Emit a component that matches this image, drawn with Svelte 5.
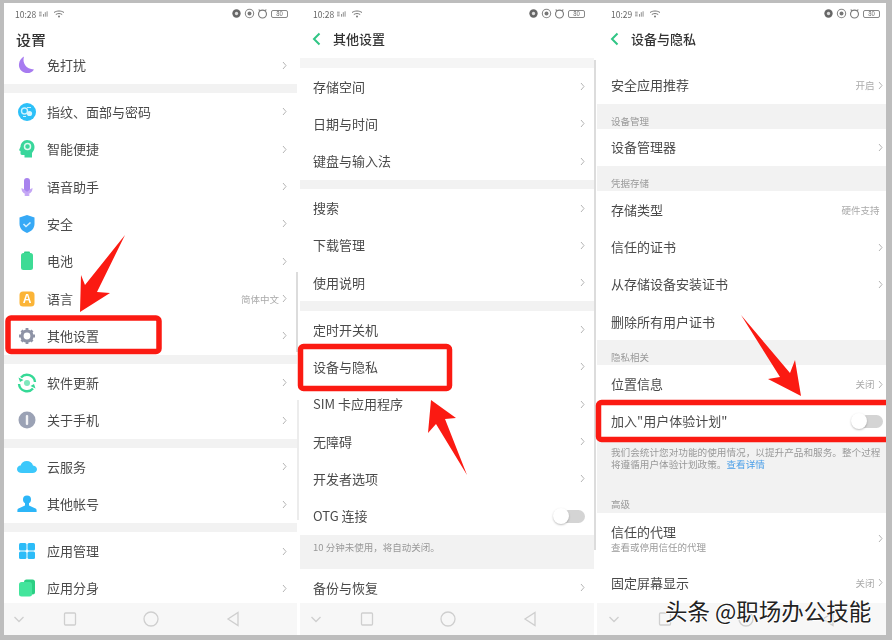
<script lang="ts">
  type Row = { text: string; icon?: string; value?: string; sub?: string; toggle?: boolean; noArrow?: boolean };
  type Section = { label?: string; note?: string[]; link?: string; noteClass?: string; gap?: string; rows: Row[] };

  const t = (text: string, value?: string): Row => ({ text, value });
  const ic = (icon: string, text: string, value?: string): Row => ({ icon, text, value });

  const phones: { time: string; title: string; back: boolean; cls: string; sections: Section[] }[] = [
    {
      time: '10:28',
      title: '设置',
      back: false,
      cls: 'first',
      sections: [
        { rows: [ic('moon', '免打扰')] },
        {
          gap: 'gap',
          rows: [
            ic('finger', '指纹、面部与密码'),
            ic('head', '智能便捷'),
            ic('mic', '语音助手'),
            ic('shield', '安全'),
            ic('battery', '电池'),
            ic('lang', '语言', '简体中文'),
            ic('gear', '其他设置'),
          ],
        },
        { gap: 'gap', rows: [ic('update', '软件更新'), ic('info', '关于手机')] },
        { gap: 'gap', rows: [ic('cloud', '云服务'), ic('person', '其他帐号')] },
        { gap: 'gap', rows: [ic('grid', '应用管理'), ic('clone', '应用分身')] },
      ],
    },
    {
      time: '10:28',
      title: '其他设置',
      back: true,
      cls: 'second',
      sections: [
        { gap: 'gap', rows: [t('存储空间'), t('日期与时间'), t('键盘与输入法')] },
        { gap: 'gap', rows: [t('搜索'), t('下载管理'), t('使用说明')] },
        {
          gap: 'gap',
          rows: [
            t('定时开关机'),
            t('设备与隐私'),
            t('SIM 卡应用程序'),
            t('无障碍'),
            t('开发者选项'),
            { text: 'OTG 连接', toggle: true },
          ],
        },
        { note: ['10 分钟未使用，将自动关闭。'], noteClass: 'short', rows: [t('备份与恢复')] },
      ],
    },
    {
      time: '10:29',
      title: '设备与隐私',
      back: true,
      cls: 'third',
      sections: [
        { gap: 'pad', rows: [t('安全应用推荐', '开启')] },
        { label: '设备管理', rows: [t('设备管理器')] },
        {
          label: '凭据存储',
          rows: [
            { text: '存储类型', value: '硬件支持', noArrow: true },
            t('信任的证书'),
            t('从存储设备安装证书'),
            { text: '删除所有用户证书', noArrow: true },
          ],
        },
        {
          label: '隐私相关',
          rows: [t('位置信息', '关闭'), { text: '加入"用户体验计划"', toggle: true }],
        },
        {
          note: ['我们会统计您对功能的使用情况，以提升产品和服务。整个过程', '将遵循用户体验计划政策。'],
          link: '查看详情',
          noteClass: 'long',
          label: '高级',
          rows: [{ text: '信任的代理', sub: '查看或停用信任的代理' }, t('固定屏幕显示', '关闭')],
        },
      ],
    },
  ];
</script>

{#snippet rowIcon(name: string)}
  <svg class="icon" viewBox="0 0 20 20" aria-hidden="true">
    {#if name === 'moon'}
      <path d="M7 1.500C5 8 9 14 17 14.500c-2 3-5 4-8 3.500C4 17 1.500 13 2 9c.3-3.500 2.500-6 5-7.500z" fill="#a77bf0" />
    {:else if name === 'finger'}
      <circle cx="10" cy="10" r="9" fill="#2cc0f8" />
      <circle cx="7.500" cy="9" r="3" fill="none" stroke="#c9f0ff" stroke-width="1.400" />
      <circle cx="12.500" cy="11.500" r="2.600" fill="#d8f5ff" />
      <path d="M10 5.500h4M6 14.500h3" stroke="#c9f0ff" stroke-width="1.200" />
    {:else if name === 'head'}
      <path d="M10 1c4.500 0 7.500 3 7.500 7 0 3-1.500 4.500-2.500 6v4.500H7.500V16H5c-1 0-1.500-.8-1.500-1.500V12L2 11.200l1.500-3.500C3.800 4 6.500 1 10 1z" fill="#38d69b" />
      <circle cx="10.500" cy="7.500" r="3" fill="none" stroke="#dffaf0" stroke-width="1.500" />
    {:else if name === 'mic'}
      <rect x="7" y="1" width="6" height="14" rx="3" fill="#a883ee" />
      <path d="M4.500 11c0 4 2.500 6 5.500 6s5.500-2 5.500-6l-2 1-3.500 3-3.500-3z" fill="#c4a6f5" />
      <rect x="7.500" y="17" width="5" height="2" rx="1" fill="#c4a6f5" />
    {:else if name === 'shield'}
      <path d="M10 1l7.500 2.500V10c0 4.500-3.500 7.500-7.500 9-4-1.500-7.500-4.500-7.500-9V3.500z" fill="#37a9f6" />
      <path d="M6.500 10l2.500 2.500 4.500-4" fill="none" stroke="#d5f0ff" stroke-width="1.600" />
    {:else if name === 'battery'}
      <rect x="7" y="0.500" width="6" height="3" rx="1" fill="#2ecf86" />
      <rect x="4" y="2" width="12" height="17" rx="2.500" fill="#3ddb95" />
    {:else if name === 'lang'}
      <rect x="2.500" y="2.500" width="15" height="15" rx="3.500" fill="#fbb437" />
      <text x="10" y="14" class="lang-a">A</text>
    {:else if name === 'gear'}
      <circle cx="10" cy="10" r="5" fill="none" stroke="#8e93a6" stroke-width="3.200" />
      <path d="M10 2v3M10 15v3M2 10h3M15 10h3M4.500 4.500l2 2M13.500 13.500l2 2M15.500 4.500l-2 2M6.500 13.500l-2 2" stroke="#8e93a6" stroke-width="2.800" />
    {:else if name === 'update'}
      <path d="M18 9a8 8 0 0 0-14-4.500M2 11a8 8 0 0 0 14 4.500" fill="none" stroke="#35d996" stroke-width="2.400" />
      <path d="M1.500 4.500L6.500 7l-3.500 2zM18.500 15.500L13.500 13l3.500-2z" fill="#35d996" />
      <circle cx="10" cy="10" r="3" fill="#7fe8bd" />
    {:else if name === 'info'}
      <circle cx="10" cy="10" r="8.500" fill="#9ba2b5" />
      <rect x="8.800" y="5" width="2.400" height="10" rx="1" fill="#f2f3f6" />
    {:else if name === 'cloud'}
      <path d="M5 16c-3 0-5-1.600-5-3.800 0-2 1.500-3.400 3.600-3.600C4.200 6 6.800 4 9.800 4c3 0 5.400 1.800 6.200 4.400 2.400.2 4 1.800 4 3.800 0 2.200-2 3.800-4.500 3.800z" fill="#3cc8fb" />
    {:else if name === 'person'}
      <circle cx="10" cy="5.500" r="4" fill="#2cb6f8" />
      <path d="M8 9h4v2.500l6.500 3c.8.4 1.100 1 1.100 2v1.500H.4v-1.500c0-1 .3-1.600 1.100-2l6.500-3z" fill="#2cb6f8" />
    {:else if name === 'grid'}
      <rect x="2" y="2" width="7.500" height="7.500" rx="1.500" fill="#2cbcf8" />
      <rect x="10.500" y="2" width="7.500" height="7.500" rx="1.500" fill="#2cbcf8" />
      <rect x="2" y="10.500" width="7.500" height="7.500" rx="1.500" fill="#2cbcf8" />
      <rect x="10.500" y="10.500" width="7.500" height="7.500" rx="1.500" fill="#2cbcf8" />
    {:else if name === 'clone'}
      <rect x="7" y="1.500" width="11" height="15" rx="2.500" fill="#2ccf84" />
      <rect x="2" y="4" width="13" height="14.500" rx="2.500" fill="#43e59c" />
    {/if}
  </svg>
{/snippet}

<div class="page">
  <div class="phones">
    {#each phones as phone}
      <section class="phone {phone.cls}">
        <div class="status">
          <div class="status-side">
            <span>{phone.time}</span>
            <svg class="signal" viewBox="0 0 10 8" aria-hidden="true">
              <path d="M0 2h3M0 4h3M0 6h3M5 7V4M7 7V2M9 7V1" stroke="#888" stroke-width="1" fill="none" />
            </svg>
            <svg class="wifi" viewBox="0 0 12 8" aria-hidden="true">
              <path d="M1 2.500c3-2 7-2 10 0M2.800 4.500c2-1.300 4.400-1.300 6.400 0" stroke="#777" stroke-width="1" fill="none" />
              <circle cx="6" cy="6.500" r="1" fill="#777" />
            </svg>
          </div>
          <div class="status-side right">
            <svg class="dot" viewBox="0 0 10 10" aria-hidden="true">
              <circle cx="5" cy="5" r="3.800" fill="#666" />
              <circle cx="5" cy="5" r="1.500" fill="#ddd" />
            </svg>
            <svg class="dot" viewBox="0 0 10 10" aria-hidden="true">
              <circle cx="5" cy="5" r="3.800" fill="none" stroke="#888" />
              <circle cx="5" cy="5" r="1.800" fill="#777" />
            </svg>
            <svg class="dot" viewBox="0 0 10 10" aria-hidden="true">
              <circle cx="5" cy="5.500" r="3.600" fill="none" stroke="#777" />
              <path d="M1.500 1.500l1.500 1M8.500 1.500L7 2.500" stroke="#777" />
            </svg>
            <span class="batt">80</span>
          </div>
        </div>

        <header class="head">
          {#if phone.back}
            <svg class="back" viewBox="0 0 9 14" aria-hidden="true">
              <path d="M7.500 1.500L2 7l5.500 5.500" fill="none" stroke="#30c585" stroke-width="2" />
            </svg>
          {/if}
          <h1>{phone.title}</h1>
        </header>

        <div class="list">
          {#each phone.sections as sec}
            {#if sec.gap}<div class={sec.gap}></div>{/if}
            {#if sec.note}
              <div class="note {sec.noteClass}">
                {#each sec.note as line, i}
                  <div>{line}{#if sec.link && i === sec.note.length - 1} <span class="link">{sec.link}</span>{/if}</div>
                {/each}
              </div>
            {/if}
            {#if sec.label}
              <div class="label" class:after-note={sec.note}>{sec.label}</div>
            {/if}
            {#each sec.rows as row}
              <div class="row" class:tall={row.sub}>
                {#if row.icon}{@render rowIcon(row.icon)}{/if}
                <div class="row-text">
                  <div>{row.text}</div>
                  {#if row.sub}<div class="sub">{row.sub}</div>{/if}
                </div>
                {#if row.value}<span class="value">{row.value}</span>{/if}
                {#if row.toggle}
                  <span class="toggle"><span class="knob"></span></span>
                {:else if !row.noArrow}
                  <svg class="arrow" viewBox="0 0 5 9" aria-hidden="true">
                    <path d="M1 1l3 3.500L1 8" fill="none" stroke="#b5b5b5" stroke-width="1" />
                  </svg>
                {/if}
              </div>
            {/each}
          {/each}
        </div>

        <nav class="nav">
          <svg viewBox="0 0 16 16" aria-hidden="true"><path d="M3.500 6L8 10.500 12.500 6" /></svg>
          <svg viewBox="0 0 16 16" aria-hidden="true"><rect x="2.500" y="2" width="11" height="12" rx="1" /></svg>
          <svg viewBox="0 0 16 16" aria-hidden="true"><circle cx="8" cy="8" r="7" /></svg>
          <svg viewBox="0 0 16 16" aria-hidden="true"><path d="M13 1.500v13L3 8z" /></svg>
        </nav>
      </section>
    {/each}
  </div>

  <div class="scroll one"></div>
  <div class="scroll two"></div>
  <div class="scroll three"></div>

  <svg class="marks" viewBox="0 0 886 640" aria-hidden="true">
    <rect x="8" y="318" width="151" height="33.500" rx="3" />
    <rect x="300.500" y="346.500" width="149" height="42" rx="3" />
    <rect x="598.500" y="402.500" width="300" height="37" rx="3" />
    <polygon points="125,235 97,292 110,293 80,312 81,275 85,285" />
    <polygon points="431,400 456,418 445,419 467,475 436,424 428,433" />
    <polygon points="741,315 790,373 795,360 801,396 768,379 780,377" />
  </svg>
</div>

<div class="watermark">头条 @职场办公技能</div>

<style>
  :global(body) {
    margin: 0;
    background: #fff;
  }

  .page {
    position: relative;
    width: 892px;
    height: 640px;
    box-sizing: border-box;
    padding: 3px 6px 5px 4px;
    background: #bdbdbd;
    font-family: 'Noto Sans CJK SC', 'Liberation Sans', sans-serif;
    color: #4a4a4a;
    filter: blur(0.55px);
    overflow: hidden;
  }

  .phones {
    display: flex;
    height: 100%;
    gap: 3px;
    background: #fff;
  }

  .phone {
    display: flex;
    flex-direction: column;
    min-width: 0;
    background: #fff;
  }

  .first {
    width: 293px;
    --left: 13px;
    --right: 10px;
  }

  .second {
    width: 294px;
    --left: 13px;
    --right: 9px;
  }

  .third {
    width: 289px;
    --left: 14px;
    --right: 3.500px;
  }

  .status {
    flex: none;
    height: 21px;
    display: flex;
    align-items: center;
    justify-content: space-between;
    padding: 0 9px 0 11px;
    font-size: 8.500px;
    color: #666;
  }

  .second .status {
    padding-left: 13px;
  }

  .third .status {
    padding-left: 14px;
    padding-right: 6px;
  }

  .status-side {
    display: flex;
    align-items: center;
    gap: 3px;
  }

  .status-side.right {
    gap: 2px;
  }

  .signal {
    width: 9px;
    height: 8px;
  }

  .wifi {
    width: 12px;
    height: 8px;
    margin-left: 2px;
  }

  .dot {
    width: 11px;
    height: 11px;
  }

  .batt {
    width: 17px;
    height: 8px;
    margin-left: 1px;
    border: 1px solid #888;
    border-radius: 2px;
    box-sizing: border-box;
    font-size: 6px;
    line-height: 6px;
    text-align: center;
  }

  .head {
    flex: none;
    height: 34px;
    box-sizing: border-box;
    display: flex;
    align-items: center;
    padding: 0 0 5px var(--left);
    color: #333;
  }

  .first .head {
    padding-left: 12px;
    padding-bottom: 4px;
  }

  .head h1 {
    margin: 0;
    font-size: 13px;
    font-weight: 500;
  }

  .first h1 {
    font-size: 15px;
  }

  .back {
    width: 9px;
    height: 14px;
    margin: 0 12px 0 -1px;
  }

  .list {
    flex: 1;
    min-height: 0;
    overflow: hidden;
  }

  .first .list {
    overflow: visible;
  }

  .first .list .row:first-child {
    margin-top: -11.500px;
  }

  .gap {
    height: 9.500px;
    background: #f2f2f2;
  }

  .second .list > .gap:first-child {
    height: 10px;
    background: #f5f5f5;
  }

  .pad {
    height: 8.500px;
  }

  .label {
    height: 25px;
    box-sizing: border-box;
    padding: 11px 0 0 var(--left);
    background: #f2f2f2;
    font-size: 9.500px;
    line-height: 13px;
    color: #999;
  }

  .label.after-note {
    height: 21px;
    padding-top: 6px;
  }

  .note {
    background: #f2f2f2;
    padding-left: var(--left);
    font-size: 9.650px;
    line-height: 12px;
    color: #999;
    white-space: nowrap;
    box-sizing: border-box;
  }

  .note.short {
    height: 34px;
    padding-top: 6px;
    font-size: 9.500px;
  }

  .note.long {
    height: 52px;
    padding-top: 6px;
  }

  .link {
    color: #4a9fe8;
  }

  .row {
    height: 37.330px;
    box-sizing: border-box;
    display: flex;
    align-items: center;
    padding: 0 var(--right) 0 var(--left);
    background: #fff;
    font-size: 13px;
    line-height: 16px;
  }

  .row.tall {
    height: 51px;
  }

  .icon {
    flex: none;
    width: 20px;
    height: 20px;
    margin-right: 10px;
  }

  .lang-a {
    fill: #fff;
    font-family: 'Liberation Sans', sans-serif;
    font-size: 12px;
    font-weight: 700;
    text-anchor: middle;
  }

  .row-text {
    flex: 1;
    min-width: 0;
    white-space: nowrap;
  }

  .sub {
    margin-top: 1px;
    font-size: 9.500px;
    line-height: 12px;
    color: #999;
  }

  .value {
    font-size: 9.500px;
    color: #aaa;
    margin-right: 3px;
  }

  .arrow {
    flex: none;
    width: 5px;
    height: 9px;
  }

  .toggle {
    position: relative;
    flex: none;
    width: 24px;
    height: 13px;
    border-radius: 7px;
    background: #d4d4d4;
  }

  .knob {
    position: absolute;
    left: -8px;
    top: -1.500px;
    width: 16px;
    height: 16px;
    border-radius: 50%;
    background: #fff;
    box-shadow: 0 1px 2px rgba(0, 0, 0, 0.25);
  }

  .nav {
    flex: none;
    height: 32px;
    position: relative;
    display: flex;
    align-items: center;
    gap: 35px;
    padding-left: 7px;
    background: #f7f7f7;
  }

  .nav svg {
    width: 16px;
    height: 16px;
    fill: none;
    stroke: #cfcfcf;
    stroke-width: 1.300;
  }

  .nav svg:nth-child(3) {
    margin-left: 30px;
  }

  .nav svg:nth-child(4) {
    margin-left: 31px;
  }

  .second .nav {
    padding-left: 8px;
  }

  .third .nav {
    padding-left: 9px;
  }

  .scroll {
    position: absolute;
    width: 2px;
    background: #dcdcdc;
  }

  .scroll.one {
    left: 296px;
    top: 272px;
    height: 80px;
  }

  .scroll.two {
    left: 297px;
    top: 400px;
    height: 120px;
    background: #ececec;
  }

  .scroll.three {
    left: 594px;
    top: 60px;
    height: 490px;
  }

  .marks {
    position: absolute;
    left: 0;
    top: 0;
    width: 886px;
    height: 640px;
  }

  .marks rect {
    fill: none;
    stroke: #fb1a12;
    stroke-width: 5.500;
  }

  .marks polygon {
    fill: #fb1a12;
  }

  .watermark {
    position: absolute;
    left: 665px;
    top: 594px;
    font-family: 'Noto Sans CJK SC', 'Liberation Sans', sans-serif;
    font-size: 22.500px;
    line-height: 32px;
    white-space: nowrap;
    color: #222;
    text-shadow: 1px 0 0 #fff, -1px 0 0 #fff, 0 1px 0 #fff, 0 -1px 0 #fff;
  }
</style>
